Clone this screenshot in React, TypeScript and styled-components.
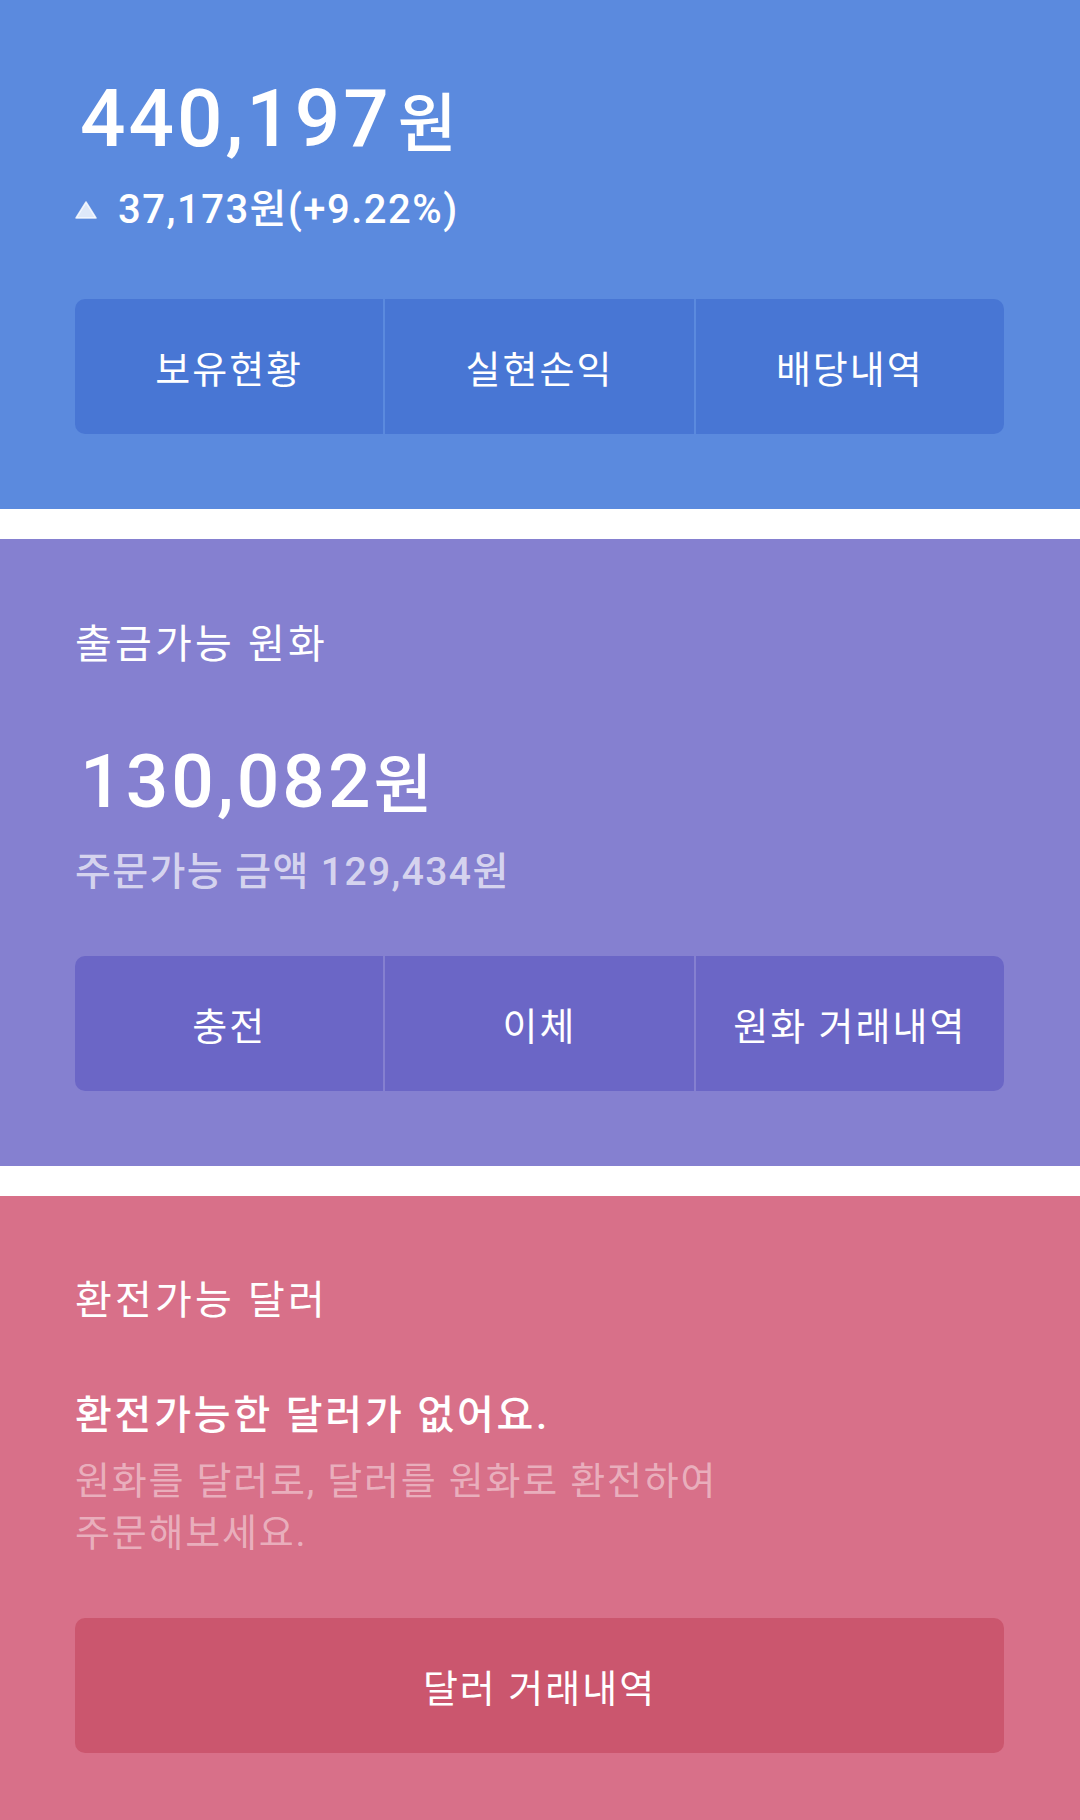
import styled, { createGlobalStyle } from 'styled-components';

const GlobalStyle = createGlobalStyle`
  html, body {
    margin: 0;
    padding: 0;
    background: #ffffff;
  }
  body {
    font-family: Roboto, "Noto Sans CJK KR", sans-serif;
    color: #ffffff;
    -webkit-font-smoothing: antialiased;
  }
`;

type Tone = { bg: string; button: string; dim: string };

const tones: Record<string, Tone> = {
  blue: { bg: '#5b8ade', button: '#4876d4', dim: 'rgba(255,255,255,0.8)' },
  purple: { bg: '#8580d0', button: '#6b66c6', dim: 'rgba(255,255,255,0.68)' },
  pink: { bg: '#d87089', button: '#cb566e', dim: 'rgba(255,255,255,0.45)' },
};

const Page = styled.div`
  display: flex;
  flex-direction: column;
  gap: 30px;
`;

const Section = styled.section<{ $tone: Tone; $top: number }>`
  background: ${(p) => p.$tone.bg};
  padding: ${(p) => p.$top}px 76px 75px 75px;
  display: flex;
  flex-direction: column;
`;

const Label = styled.div`
  font-size: 40px;
  line-height: 48px;
  font-weight: 400;
  letter-spacing: 3.2px;
`;

const Amount = styled.div<{ $size: number; $gap: number }>`
  font-size: ${(p) => p.$size}px;
  line-height: 96px;
  height: 96px;
  font-weight: 500;
  letter-spacing: 3px;
  margin-top: ${(p) => p.$gap}px;
  margin-left: 5px;
  white-space: nowrap;
`;

const Unit = styled.span<{ $space: number }>`
  font-size: 64px;
  line-height: 0;
  font-weight: 500;
  letter-spacing: 0;
  margin-left: ${(p) => p.$space}px;
`;

const ChangeRow = styled.div`
  display: flex;
  align-items: center;
  gap: 21px;
  margin-top: 19px;
  font-size: 40px;
  line-height: 48px;
  font-weight: 500;
  letter-spacing: 1.5px;
`;

const UpMark = styled.svg`
  width: 22px;
  height: 18px;
  flex: none;
`;

const SubLine = styled.div<{ $color: string }>`
  margin-top: 19px;
  font-size: 39px;
  line-height: 48px;
  color: ${(p) => p.$color};
  font-weight: 500;
  letter-spacing: 1.4px;
`;

const Notice = styled.div`
  margin-top: 67px;
  font-size: 40px;
  line-height: 48px;
  font-weight: 500;
  letter-spacing: 2.8px;
`;

const Hint = styled.div<{ $color: string }>`
  margin-top: 15px;
  font-size: 38px;
  line-height: 52px;
  letter-spacing: 1.8px;
  color: ${(p) => p.$color};
`;

const ButtonRow = styled.div<{ $gap: number }>`
  display: flex;
  gap: 2px;
  margin-top: ${(p) => p.$gap}px;
  border-radius: 10px;
  overflow: hidden;
`;

const ActionButton = styled.button<{ $color: string }>`
  flex: 1;
  height: 135px;
  border: 0;
  padding: 0;
  background: ${(p) => p.$color};
  color: #ffffff;
  font-family: inherit;
  font-size: 38px;
  font-weight: 400;
  letter-spacing: 2px;
  cursor: pointer;
`;

function ButtonGroup(props: { labels: string[]; tone: Tone; gap: number }) {
  const { labels, tone, gap } = props;
  return (
    <ButtonRow $gap={gap}>
      {labels.map((label) => (
        <ActionButton key={label} type="button" $color={tone.button}>
          {label}
        </ActionButton>
      ))}
    </ButtonRow>
  );
}

export default function App() {
  return (
    <>
      <GlobalStyle />
      <Page>
        <Section $tone={tones.blue} $top={71}>
          <Amount $size={80} $gap={0}>
            440,197
            <Unit $space={6}>원</Unit>
          </Amount>
          <ChangeRow>
            <UpMark viewBox="0 0 22 18">
              <path d="M11 1 L21 17 L1 17 Z" fill={tones.blue.dim} strokeLinejoin="round" stroke={tones.blue.dim} strokeWidth="1.5" />
            </UpMark>
            <span>37,173원(+9.22%)</span>
          </ChangeRow>
          <ButtonGroup labels={['보유현황', '실현손익', '배당내역']} tone={tones.blue} gap={65} />
        </Section>

        <Section $tone={tones.purple} $top={82}>
          <Label>출금가능 원화</Label>
          <Amount $size={75} $gap={64}>
            130,082
            <Unit $space={0}>원</Unit>
          </Amount>
          <SubLine $color={tones.purple.dim}>주문가능 금액 129,434원</SubLine>
          <ButtonGroup labels={['충전', '이체', '원화 거래내역']} tone={tones.purple} gap={60} />
        </Section>

        <Section $tone={tones.pink} $top={81}>
          <Label>환전가능 달러</Label>
          <Notice>환전가능한 달러가 없어요.</Notice>
          <Hint $color={tones.pink.dim}>
            원화를 달러로, 달러를 원화로 환전하여
            <br />
            주문해보세요.
          </Hint>
          <ButtonGroup labels={['달러 거래내역']} tone={tones.pink} gap={59} />
        </Section>
      </Page>
    </>
  );
}
